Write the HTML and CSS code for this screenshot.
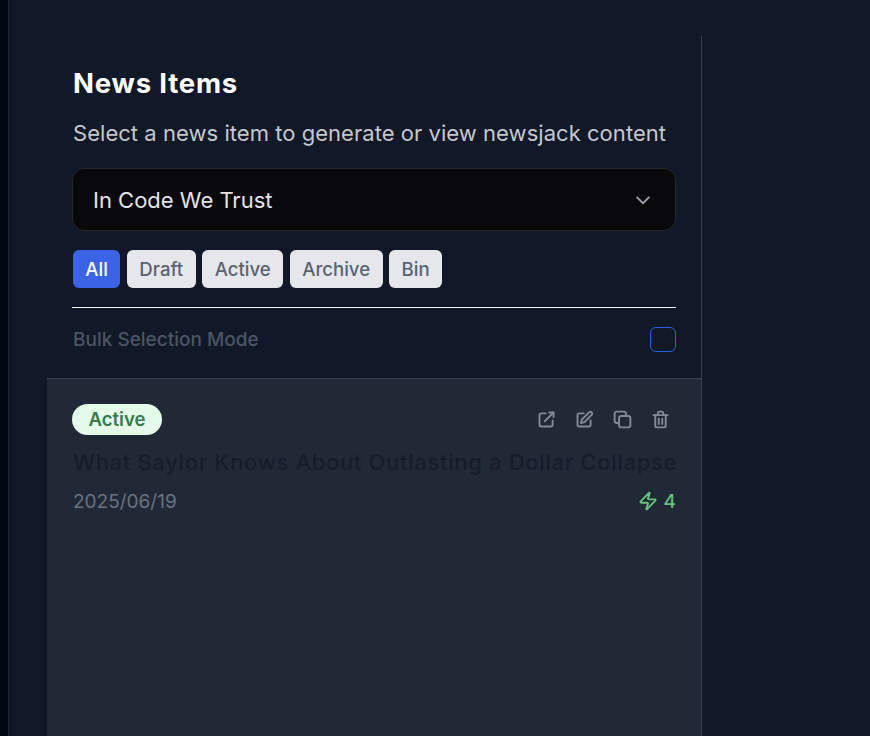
FILE: index.html
```html
<!DOCTYPE html>
<html lang="en">
    <head>
        <meta charset="utf-8"/>
        <title>News Items</title>
        <link rel="stylesheet" href="styles.css">
    </head>
    <body>
        <div class="rail"></div>
        <main class="main">
            <section class="panel">
                <header class="panelHead">
                    <h1 class="title">News Items</h1>
                    <p class="subtitle">Select a news item to generate or view newsjack content</p>
                    <div class="select">
                        <span>In Code We Trust</span>
                        <svg class="chevron" viewBox="0 0 24 24" width="22" height="22"><path d="M5 8.500l7 7 7-7"/></svg>
                    </div>
                    <div class="filters">
                        <button class="filter filterOn">All</button>
                        <button class="filter">Draft</button>
                        <button class="filter">Active</button>
                        <button class="filter">Archive</button>
                        <button class="filter">Bin</button>
                    </div>
                    <div class="bulk">
                        <span class="bulkLabel">Bulk Selection Mode</span>
                        <span class="checkbox"></span>
                    </div>
                </header>
                <article class="item">
                    <div class="itemTop">
                        <span class="badge">Active</span>
                        <div class="actions">
                            <svg class="icon" viewBox="0 0 24 24"><path d="M11 5H6a2 2 0 0 0-2 2v11a2 2 0 0 0 2 2h11a2 2 0 0 0 2-2v-5"/><path d="M10 14L20 4"/><path d="M15 4h5v5"/></svg>
                            <svg class="icon" viewBox="0 0 24 24"><path d="M11 5H6a2 2 0 0 0-2 2v11a2 2 0 0 0 2 2h11a2 2 0 0 0 2-2v-5"/><path d="M17.600 3.600a2 2 0 0 1 2.800 2.800L12 15l-4 1 1-4z"/></svg>
                            <svg class="icon" viewBox="0 0 24 24"><rect x="8" y="8" width="13" height="13" rx="2.500"/><path d="M16 8V5.500A2.500 2.500 0 0 0 13.500 3h-8A2.500 2.500 0 0 0 3 5.500v8A2.500 2.500 0 0 0 5.500 16H8"/></svg>
                            <svg class="icon" viewBox="0 0 24 24"><path d="M4 7h16"/><path d="M9 7V4.500A1.500 1.500 0 0 1 10.500 3h3A1.500 1.500 0 0 1 15 4.500V7"/><path d="M6 7v12a2 2 0 0 0 2 2h8a2 2 0 0 0 2-2V7"/><path d="M10 11v6"/><path d="M14 11v6"/></svg>
                        </div>
                    </div>
                    <h2 class="itemTitle">What Saylor Knows About Outlasting a Dollar Collapse</h2>
                    <div class="itemFoot">
                        <span class="date">2025/06/19</span>
                        <span class="count">
                            <svg class="bolt" viewBox="0 0 24 24"><path d="M4 14a1 1 0 0 1-.78-1.630l9.900-10.200a.500.500 0 0 1 .860.460l-1.920 6.020A1 1 0 0 0 13 10h7a1 1 0 0 1 .780 1.630l-9.900 10.200a.500.500 0 0 1-.860-.460l1.920-6.020A1 1 0 0 0 11 14z"/></svg>
                            4
                        </span>
                    </div>
                </article>
            </section>
        </main>
    </body>
</html>
```

FILE: styles.css
```css
html, body {
    height: 100%;
}

body {
    margin: 0;
    display: flex;
    overflow: hidden;
    background: #111827;
    font-family: Inter, "Liberation Sans", sans-serif;
}

.rail {
    width: 9px;
    flex: none;
    background: #030712;
    border-right: 1px solid #1f2937;
    box-sizing: border-box;
}

.main {
    flex: 1;
    padding: 36px 0 0 38px;
}

.panel {
    width: 655px;
    height: 700px;
    box-sizing: border-box;
    border-right: 1px solid #374151;
    display: flex;
    flex-direction: column;
}

.panelHead {
    padding: 29px 25px 0;
    border-bottom: 1px solid #374151;
}

.title {
    margin: 0 0 0 1px;
    font-size: 27.500px;
    line-height: 36px;
    font-weight: 700;
    letter-spacing: 0.800px;
    color: #ffffff;
}

.subtitle {
    margin: 18px 0 0 1px;
    font-size: 22px;
    line-height: 28px;
    letter-spacing: 0.040px;
    color: #c5c8ce;
    white-space: nowrap;
}

.select {
    margin-top: 21px;
    height: 63px;
    box-sizing: border-box;
    padding: 0 21px 0 20px;
    display: flex;
    align-items: center;
    justify-content: space-between;
    background: #09090b;
    border: 1px solid #27272a;
    border-radius: 12px;
    font-size: 22px;
    color: #e4e4e7;
}

.chevron {
    fill: none;
    stroke: #a1a1aa;
    stroke-width: 2;
}

.filters {
    margin-top: 19px;
    padding-left: 0.800px;
    display: flex;
    gap: 6.500px;
}

.filter {
    height: 38px;
    padding: 0 12.500px;
    border: 0;
    border-radius: 6px;
    background: #e5e7eb;
    color: #5b6372;
    font-family: inherit;
    font-size: 18.600px;
    font-weight: 500;
}

.filterOn {
    background: #3b63e6;
    color: #ffffff;
}

.bulk {
    margin-top: 19px;
    height: 71px;
    box-sizing: border-box;
    padding-bottom: 7px;
    display: flex;
    align-items: center;
    justify-content: space-between;
    border-top: 1px solid #f3f4f6;
}

.bulkLabel {
    margin-left: 1px;
    font-size: 19px;
    font-weight: 500;
    color: #4b5563;
}

.checkbox {
    width: 26px;
    height: 25px;
    box-sizing: border-box;
    border: 1px solid #2563eb;
    border-radius: 6px;
}

.item {
    flex: 1;
    padding: 25px 25px 0;
    background: #212936;
}

.itemTop {
    display: flex;
    align-items: center;
    justify-content: space-between;
}

.badge {
    width: 90px;
    height: 30.500px;
    display: flex;
    align-items: center;
    justify-content: center;
    border-radius: 16px;
    background: #e3fbe8;
    color: #377a4d;
    font-size: 18.600px;
    font-weight: 600;
}

.actions {
    display: flex;
    gap: 17px;
    padding-right: 5.500px;
}

.icon {
    width: 21px;
    height: 21px;
    fill: none;
    stroke: #858993;
    stroke-width: 2.200;
    stroke-linecap: round;
    stroke-linejoin: round;
}

.itemTitle {
    margin: 9px 0 0 1px;
    font-size: 22px;
    line-height: 37px;
    font-weight: 450;
    letter-spacing: 0.660px;
    color: #151c2a;
    white-space: nowrap;
}

.itemFoot {
    margin-top: 6px;
    display: flex;
    align-items: center;
    justify-content: space-between;
}

.date {
    margin-left: 1px;
    font-size: 19px;
    line-height: 29px;
    color: #6b7280;
}

.count {
    display: flex;
    align-items: center;
    gap: 6px;
    font-size: 19px;
    font-weight: 500;
    color: #62c47a;
}

.bolt {
    width: 20px;
    height: 20px;
    fill: none;
    stroke: #62c47a;
    stroke-width: 2.300;
    stroke-linejoin: round;
}
```
